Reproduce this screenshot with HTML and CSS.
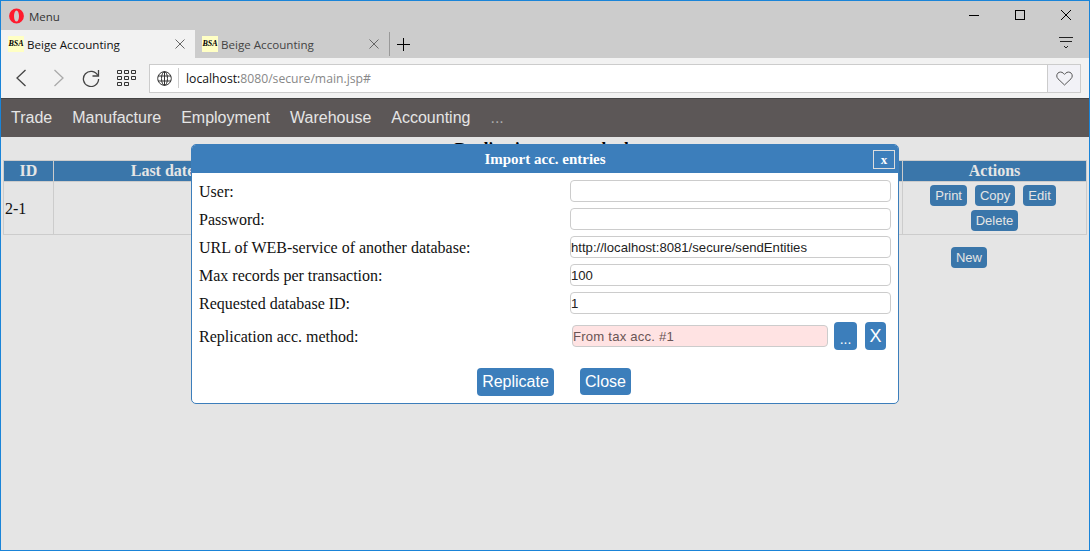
FILE: index.html
```html
<!DOCTYPE html>
<html lang="en">
<head>
<meta charset="utf-8">
<title>Beige Accounting</title>
<link rel="stylesheet" href="styles.css">
</head>
<body>
<div class="window">
  <header class="titlebar">
    <svg class="opera" width="15" height="16" viewBox="0 0 15 16"><path fill="#ff1b2d" fill-rule="evenodd" d="M7.500 .6a7.400 7.400 0 1 0 0 14.800 7.400 7.400 0 0 0 0-14.800zm0 1.800c1.500 0 2.500 2.500 2.500 5.600s-1 5.600-2.500 5.600S5 11.100 5 8s1-5.600 2.500-5.600z"/></svg>
    <span class="menu-label">Menu</span>
    <div class="win-controls">
      <svg width="12" height="12" viewBox="0 0 12 12"><path d="M1 6.500h10" stroke="#000" fill="none"/></svg>
      <svg width="12" height="12" viewBox="0 0 12 12"><rect x="1.500" y="1.500" width="9" height="9" stroke="#000" fill="none"/></svg>
      <svg width="12" height="12" viewBox="0 0 12 12"><path d="M1 1l10 10M11 1L1 11" stroke="#000" fill="none"/></svg>
    </div>
  </header>
  <div class="tabbar">
    <div class="tab tab-active">
      <span class="favicon">BSA</span><span class="tab-title">Beige Accounting</span>
      <svg class="tab-close" width="10" height="10" viewBox="0 0 10 10"><path d="M.5.5l9 9M9.500.5l-9 9" stroke="#666" fill="none"/></svg>
    </div>
    <div class="tab">
      <span class="favicon">BSA</span><span class="tab-title">Beige Accounting</span>
      <svg class="tab-close" width="10" height="10" viewBox="0 0 10 10"><path d="M.5.5l9 9M9.500.5l-9 9" stroke="#666" fill="none"/></svg>
    </div>
    <span class="tab-sep"></span>
    <svg class="tab-plus" width="13" height="13" viewBox="0 0 13 13"><path d="M6.500 0v13M0 6.500h13" stroke="#000" fill="none"/></svg>
    <svg class="tab-menu" width="14" height="12" viewBox="0 0 14 12"><path d="M0 .5h14M1 4.500h12M5 9l2 2 2-2" stroke="#222" fill="none"/></svg>
  </div>
  <div class="toolbar">
    <svg class="tool-back" width="12" height="18" viewBox="0 0 12 18"><path d="M10.500 1L2 9l8.500 8" stroke="#444" stroke-width="1.300" fill="none"/></svg>
    <svg class="tool-forward" width="12" height="18" viewBox="0 0 12 18"><path d="M1.500 1L10 9l-8.500 8" stroke="#aaa" stroke-width="1.300" fill="none"/></svg>
    <svg class="tool-reload" width="18" height="18" viewBox="0 0 18 18"><path d="M15.800 6.500A7.600 7.600 0 1 0 16.600 10" stroke="#444" stroke-width="1.300" fill="none"/><path d="M16.500 1v6h-6" stroke="#444" stroke-width="1.300" fill="none"/></svg>
    <svg class="tool-grid" width="19" height="16" viewBox="0 0 19 16"><path d="M.5.5h4v3h-4zM7.500.5h4v3h-4zM14.500.5h4v3h-4zM.5 6.500h4v3h-4zM7.500 6.500h4v3h-4zM14.500 6.500h4v3h-4zM.5 12.500h4v3h-4zM7.500 12.500h4v3h-4z" stroke="#333" fill="none"/></svg>
    <div class="address">
      <svg class="globe" width="15" height="15" viewBox="0 0 15 15"><g stroke="#333" fill="none"><circle cx="7.500" cy="7.500" r="6.800"/><ellipse cx="7.500" cy="7.500" rx="3" ry="6.800"/><path d="M7.500.7v13.600M1 5h13M1 10h13"/></g></svg>
      <span class="address-sep"></span>
      <span class="url"><span class="url-host">localhost:</span>8080/secure/main.jsp#</span>
      <span class="heart-box"><svg width="17" height="15" viewBox="0 0 17 15"><path d="M8.500 14L2 7.800C.4 6.200.4 3.700 1.800 2.200c1.500-1.500 4-1.500 5.500 0l1.200 1.200 1.200-1.200c1.500-1.500 4-1.500 5.500 0 1.400 1.500 1.400 4-.2 5.600z" stroke="#555" fill="none"/></svg></span>
    </div>
  </div>
  <nav class="mainnav">
    <a class="nav-item">Trade</a>
    <a class="nav-item">Manufacture</a>
    <a class="nav-item">Employment</a>
    <a class="nav-item">Warehouse</a>
    <a class="nav-item">Accounting</a>
    <a class="nav-item nav-more">...</a>
  </nav>
  <main class="page">
    <h1 class="page-title">Replication acc. methods</h1>
    <table class="grid">
      <thead>
        <tr>
          <th class="col-id">ID</th>
          <th class="col-date">Last date</th>
          <th></th>
          <th class="col-actions">Actions</th>
        </tr>
      </thead>
      <tbody>
        <tr>
          <td>2-1</td>
          <td></td>
          <td></td>
          <td class="actions-cell">
            <button class="btn">Print</button>
            <button class="btn">Copy</button>
            <button class="btn btn-last">Edit</button>
            <button class="btn">Delete</button>
          </td>
        </tr>
      </tbody>
    </table>
    <div class="page-actions"><button class="btn">New</button></div>
  </main>
  <section class="dialog">
    <div class="dialog-head">
      <span class="dialog-title">Import acc. entries</span>
      <button class="dialog-x">x</button>
    </div>
    <div class="dialog-body">
      <div class="row"><label class="lbl">User:</label><input class="field" type="text"></div>
      <div class="row"><label class="lbl">Password:</label><input class="field" type="text"></div>
      <div class="row"><label class="lbl">URL of WEB-service of another database:</label><input class="field" type="text" value="http://localhost:8081/secure/sendEntities"></div>
      <div class="row"><label class="lbl">Max records per transaction:</label><input class="field" type="text" value="100"></div>
      <div class="row"><label class="lbl">Requested database ID:</label><input class="field" type="text" value="1"></div>
      <div class="row row-method">
        <label class="lbl">Replication acc. method:</label>
        <input class="field field-pink" type="text" value="From tax acc. #1" readonly>
        <button class="btn-dlg btn-dots">...</button>
        <button class="btn-dlg btn-clear">X</button>
      </div>
      <div class="dialog-foot">
        <button class="btn-dlg btn-replicate">Replicate</button>
        <button class="btn-dlg btn-close">Close</button>
      </div>
    </div>
  </section>
</div>
</body>
</html>
```
FILE: styles.css
```css
* { box-sizing: border-box; }
html, body { margin: 0; padding: 0; }
body { width: 1090px; height: 551px; overflow: hidden; font-family: "Liberation Serif", serif; }

.window {
  position: relative;
  width: 1090px;
  height: 551px;
  border: 1px solid #1a84d8;
  background: #e5e5e5;
  display: flex;
  flex-direction: column;
  overflow: hidden;
}

.titlebar {
  height: 29px;
  background: #cccccc;
  display: flex;
  align-items: center;
  padding-left: 8px;
  flex: none;
}
.opera { flex: none; margin-top: 1px; }
.menu-label { font: 11.5px "Open Sans", sans-serif; color: #333; margin: 1px 0 0 5px; }
.win-controls { margin-left: auto; display: flex; gap: 34px; padding-right: 17px; margin-top: -1px; }

.tabbar {
  height: 28px;
  background: #cccccc;
  display: flex;
  align-items: center;
  flex: none;
}
.tab {
  width: 194px;
  height: 28px;
  display: flex;
  align-items: center;
  padding-left: 7px;
  font: 11.6px "Open Sans", sans-serif;
  color: #444;
}
.tab-active { background: #f2f2f2; color: #111; }
.favicon {
  width: 16px;
  height: 16px;
  background: #ffffc4;
  font: italic bold 8px/16px "Liberation Serif", serif;
  color: #000;
  text-align: center;
  flex: none;
}
.tab-title { margin-left: 3px; flex: 1; }
.tab-close { flex: none; margin-right: 10px; }
.tab-sep { width: 1px; height: 24px; background: #999; }
.tab-plus { margin-left: 7px; }
.tab-menu { margin-left: auto; margin-right: 16px; margin-top: -3px; }

.toolbar {
  height: 40px;
  background: #f2f2f2;
  display: flex;
  align-items: center;
  flex: none;
}
.tool-back { margin-left: 14px; }
.tool-forward { margin-left: 26px; }
.tool-reload { margin-left: 17px; }
.tool-grid { margin-left: 17px; }
.address {
  margin-left: 13px;
  width: 932px;
  height: 29px;
  background: #fff;
  border: 1px solid #cccccc;
  display: flex;
  align-items: center;
}
.globe { margin-left: 7px; flex: none; }
.address-sep { width: 1px; height: 20px; background: #ccc; margin-left: 6px; }
.url { margin-left: 7px; font: 12.2px "Open Sans", sans-serif; color: #888; flex: 1; }
.url-host { color: #111; }
.heart-box {
  width: 33px;
  height: 27px;
  background: #f2f2f7;
  border-left: 1px solid #ccc;
  display: flex;
  align-items: center;
  justify-content: center;
  flex: none;
}

.mainnav {
  height: 39px;
  background: #5c5757;
  border-top: 1px solid #444;
  display: flex;
  align-items: center;
  flex: none;
}
.nav-item {
  font: 16px "Liberation Sans", sans-serif;
  color: #e5e5e5;
  padding: 0 10px;
}
.nav-more { color: #aaa; }

.page { flex: 1; min-height: 0; }
.page-title {
  margin: 0;
  height: 23px;
  padding-top: 2px;
  font: bold 17px/20px "Liberation Serif", serif;
  text-align: center;
  color: #000;
}

.grid {
  margin-left: 2px;
  width: 1084px;
  border-collapse: collapse;
  table-layout: fixed;
  font-size: 16px;
}
.grid th {
  background: #3a76aa;
  color: #e5e5e5;
  border: 1px solid #cccccc;
  height: 21px;
  padding: 0 0 1px;
  font: bold 16px/19px "Liberation Serif", serif;
}
.grid td {
  border: 1px solid #cccccc;
  padding: 2px 1px 0;
  color: #111;
}
.col-id { width: 50px; }
.col-date { width: 218px; }
.col-actions { width: 184px; }
.grid .actions-cell { text-align: center; line-height: 25px; padding: 1px 0; }

.btn {
  font: 13px "Liberation Sans", sans-serif;
  color: #e5e5e5;
  background: #3a76aa;
  border: 0;
  border-radius: 4px;
  height: 21px;
  padding: 0 5px;
  margin: 2px 2px;
  line-height: 21px;
  vertical-align: top;
}
.btn-last { margin-right: 5px; }

.page-actions {
  display: flex;
  justify-content: flex-end;
  padding: 10px 100px 0 0;
}

.dialog {
  position: absolute;
  left: 190px;
  top: 143px;
  width: 708px;
  height: 260px;
  background: #fff;
  border: 1px solid #3c7ebb;
  border-radius: 5px;
  overflow: hidden;
}
.dialog-head {
  height: 28px;
  background: #3c7ebb;
  display: flex;
  align-items: center;
  justify-content: center;
  position: relative;
}
.dialog-title { font: bold 15px "Liberation Serif", serif; color: #fff; padding-top: 1px; }
.dialog-x {
  position: absolute;
  right: 3px;
  top: 5px;
  width: 22px;
  height: 19px;
  background: transparent;
  border: 1px solid #ddd;
  color: #fff;
  font: bold 13px/15px "Liberation Serif", serif;
  padding: 0;
}
.dialog-body { padding: 7px 6px 0; }
.row { display: flex; align-items: center; height: 22px; margin-bottom: 6px; }
.lbl { width: 372px; font-size: 16px; color: #111; flex: none; padding: 1px 0 0 1px; }
.field {
  width: 321px;
  height: 22px;
  border: 1px solid #ccc;
  border-radius: 4px;
  font: 13.15px "Liberation Sans", sans-serif;
  color: #222;
  padding: 0;
  background: #fff;
}
.row-method { height: 28px; margin-top: 8px; margin-bottom: 0; }
.field-pink {
  width: 256px;
  margin-left: 2px;
  background: #ffe3e3;
  color: #6a5555;
  letter-spacing: .2px;
}
.btn-dlg {
  background: #3c7ebb;
  color: #fff;
  border: 0;
  border-radius: 4px;
  font: 16px "Liberation Sans", sans-serif;
  padding: 0;
}
.btn-dots { width: 23px; height: 28px; margin-left: 6px; font-size: 14px; padding-top: 6px; }
.btn-clear { width: 21px; height: 28px; margin-left: 8px; font-size: 18px; }
.dialog-foot { display: flex; padding: 18px 0 0 279px; gap: 26px; align-items: flex-start; }
.btn-replicate { width: 77px; height: 28px; }
.btn-close { width: 51px; height: 27px; }
```
